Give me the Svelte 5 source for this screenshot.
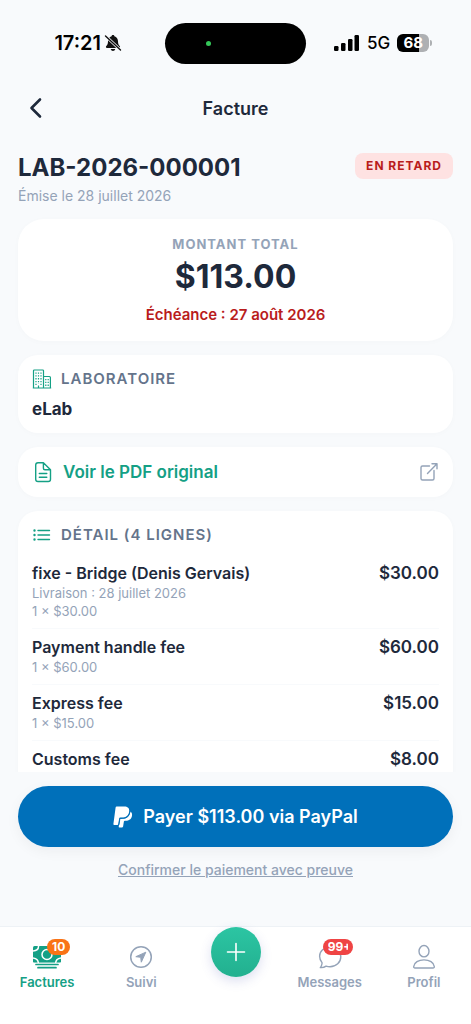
<script lang="ts">
  type Line = {
    name: string;
    delivery?: string;
    quantity: number;
    price: number;
  };

  const invoice = {
    number: "LAB-2026-000001",
    issued: "28 juillet 2026",
    due: "27 août 2026",
    lab: "eLab",
  };

  const lines: Line[] = [
    { name: "fixe - Bridge (Denis Gervais)", delivery: "28 juillet 2026", quantity: 1, price: 30 },
    { name: "Payment handle fee", quantity: 1, price: 60 },
    { name: "Express fee", quantity: 1, price: 15 },
    { name: "Customs fee", quantity: 1, price: 8 },
  ];

  const total = lines.reduce((sum, line) => sum + line.quantity * line.price, 0);

  const money = (value: number) => `$${value.toFixed(2)}`;
</script>

<div class="screen">
  <div class="status-bar">
    <div class="clock">
      <span>17:21</span>
      <svg width="18" height="18" viewBox="0 0 18 18" aria-hidden="true">
        <path fill="#111" d="M9 1c-.9 0-1.300.6-1.400 1.200C5.200 2.900 4 5 4 7.300c0 2.700-.7 3.700-1.700 4.700-.7.700-.4 1.900.7 1.900h12c1.100 0 1.400-1.200.7-1.900-1-1-1.700-2-1.700-4.700 0-2.300-1.200-4.400-3.600-5.100C10.300 1.600 9.900 1 9 1zM6.700 15h4.600c-.3 1.200-1.200 1.900-2.300 1.900S7 16.200 6.700 15z" />
        <path stroke="#f8fafc" stroke-width="3" d="M1 1.500l16 15" />
        <path stroke="#111" stroke-width="1.400" stroke-linecap="round" d="M1.500 2l15 14" />
      </svg>
    </div>
    <div class="island"><span class="dot"></span></div>
    <div class="signal">
      <svg width="26" height="16" viewBox="0 0 26 16" fill="#000" aria-hidden="true">
        <rect x="0" y="11" width="4.500" height="5" rx="1.200" />
        <rect x="7" y="8" width="4.500" height="8" rx="1.200" />
        <rect x="14" y="4" width="4.500" height="12" rx="1.200" />
        <rect x="20.500" y="0" width="4.500" height="16" rx="1.200" />
      </svg>
      <span class="network">5G</span>
      <span class="battery">68</span>
    </div>
  </div>

  <header>
    <button class="back" aria-label="Retour">
      <svg width="14" height="22" viewBox="0 0 14 22" fill="none" stroke="#1e293b" stroke-width="2.600" stroke-linecap="round" stroke-linejoin="round">
        <path d="M11 2.500L2.500 11l8.500 8.500" />
      </svg>
    </button>
    <h1>Facture</h1>
  </header>

  <main>
    <div class="heading">
      <div>
        <h2>{invoice.number}</h2>
        <p class="issued">Émise le {invoice.issued}</p>
      </div>
      <span class="status">EN RETARD</span>
    </div>

    <section class="card total">
      <p class="total-label">MONTANT TOTAL</p>
      <p class="amount">{money(total)}</p>
      <p class="due">Échéance : {invoice.due}</p>
    </section>

    <section class="card">
      <h3>
        <svg width="20" height="20" viewBox="0 0 20 20" fill="none" stroke="#14a085" stroke-width="1.200" stroke-linejoin="round" aria-hidden="true">
          <path d="M1.500 19V1.800Q1.500 1 2.300 1h8.400q.8 0 .8.800V19M11.500 7.500h6q.9 0 .9.900V19M.8 19h18.400M6.500 19v-2.500" />
          <path stroke-dasharray="1.300 1.500" d="M4 3.500v13M6.500 3.500v11.500M9 3.500v13M13.800 10v7M16.200 10v7" />
        </svg>
        LABORATOIRE
      </h3>
      <p class="lab">{invoice.lab}</p>
    </section>

    <a class="card pdf" href="#pdf">
      <svg width="22" height="22" viewBox="0 0 22 22" fill="none" stroke="#14a085" stroke-width="1.400" stroke-linecap="round" stroke-linejoin="round" aria-hidden="true">
        <path d="M18.500 8.800v9.400q0 2.300-2.300 2.300H6q-2.300 0-2.300-2.300V4Q3.700 1.700 6 1.700h5.400zM11.400 1.700v5.600q0 1.500 1.500 1.500h5.600M7.300 12.500h7.500M7.300 16.200h7.500" />
      </svg>
      <span>Voir le PDF original</span>
      <svg width="20" height="20" viewBox="0 0 20 20" fill="none" stroke="#94a3b8" stroke-width="1.400" stroke-linecap="round" stroke-linejoin="round" aria-hidden="true">
        <path d="M10.500 4H3.500Q2 4 2 5.500v11Q2 18 3.500 18h10q1.500 0 1.500-1.500V8.500M13 1.800h5v5M18 1.800l-9.500 9.700" />
      </svg>
    </a>

    <section class="card">
      <h3>
        <svg width="20" height="20" viewBox="0 0 20 20" fill="none" stroke="#14a085" stroke-width="1.400" stroke-linecap="round" aria-hidden="true">
          <path d="M6 5.500h11.500M6 10h11.500M6 14.500h11.500" />
          <path stroke-width="2.400" d="M2.500 5.500h.01M2.500 10h.01M2.500 14.500h.01" />
        </svg>
        DÉTAIL ({lines.length} LIGNES)
      </h3>
      <ul>
        {#each lines as line (line.name)}
          <li>
            <div>
              <p class="name">{line.name}</p>
              {#if line.delivery}
                <p class="meta">Livraison : {line.delivery}</p>
              {/if}
              <p class="meta">{line.quantity} × {money(line.price)}</p>
            </div>
            <span class="price">{money(line.quantity * line.price)}</span>
          </li>
        {/each}
      </ul>
    </section>
  </main>

  <div class="actions">
    <button class="pay">
      <svg width="20" height="22" viewBox="0 0 20 22" fill="#fff" aria-hidden="true">
        <path d="M3.700.5h7.600c3.200 0 5.300 1.500 4.900 4.900-.6 4.200-3.300 6-6.900 6H7.200c-.6 0-.9.300-1 .9L5.300 18c-.1.600-.4.900-1 .9H1c-.5 0-.7-.3-.6-.8L2.600 1.500C2.700.8 3.100.500 3.700.500z" />
        <path d="M17.300 5.600c1.500.8 2 2.300 1.700 4.100-.6 3.600-3 5-6.200 5h-.9c-.6 0-.9.300-1 .9l-.8 5c-.1.500-.4.800-.9.800H6.300c-.5 0-.7-.3-.6-.7l1.200-7.200c.1-.5.400-.8.900-.8h1.700c4.200 0 7.100-2.200 7.800-7.100z" />
        <path fill="none" stroke="#0070ba" stroke-width="1" d="M17 5.300c-.6 4.900-3.400 7.100-7.600 7.100H7.800c-.6 0-.9.300-1 .8L5.900 18.900" />
      </svg>
      Payer {money(total)} via PayPal
    </button>
    <a class="confirm" href="#preuve">Confirmer le paiement avec preuve</a>
  </div>

  <nav>
    <a class="tab active" href="#factures">
      <span class="icon">
        <svg width="28" height="24" viewBox="0 0 28 24" aria-hidden="true">
          <rect x="0" y="1" width="28" height="17" rx="1.500" fill="#14a085" />
          <g fill="none" stroke="#fff" stroke-width="1.500">
            <circle cx="14" cy="9.500" r="5" />
            <path d="M5.500 0v1.500q0 4-5.500 4.500M22.500 0v1.500q0 4 5.500 4.500M0 13q5.500.5 5.500 6M28 13q-5.500.5-5.500 6" />
          </g>
          <path stroke="#fff" stroke-width="1.500" d="M0 18.300h28" />
          <path stroke="#14a085" stroke-width="1.700" stroke-linecap="round" d="M3 19.500h22M5 22.700h18" />
        </svg>
        <span class="badge orange">10</span>
      </span>
      Factures
    </a>
    <a class="tab" href="#suivi">
      <span class="icon">
        <svg width="24" height="24" viewBox="0 0 24 24" aria-hidden="true">
          <circle cx="12" cy="12" r="10.300" fill="none" stroke="#94a3b8" stroke-width="1.500" />
          <path fill="#94a3b8" stroke="#94a3b8" stroke-linejoin="round" d="M16.800 7.200L6.800 11.700l4.900.6.600 4.900z" />
        </svg>
      </span>
      Suivi
    </a>
    <div class="tab">
      <button class="add" aria-label="Ajouter">
        <svg width="22" height="22" viewBox="0 0 22 22" stroke="#fff" stroke-width="1.600" stroke-linecap="round">
          <path d="M11 2.500v17M2.500 11h17" />
        </svg>
      </button>
    </div>
    <a class="tab" href="#messages">
      <span class="icon">
        <svg width="24" height="24" viewBox="0 0 24 24" fill="none" stroke="#94a3b8" stroke-width="1.400" stroke-linecap="round" stroke-linejoin="round" aria-hidden="true">
          <path d="M12 2C6 2 1.600 6 1.600 11.200c0 2.600 1 4.600 2.400 6.400.3.800-.5 3.600-1.700 5 2.200.2 4.300-.4 5.800-1.500 1.200.4 2.500.6 3.900.6 6.200 0 10.800-4.500 10.800-10S18 2 12 2z" />
        </svg>
        <span class="badge red"><span>99+</span></span>
      </span>
      Messages
    </a>
    <a class="tab" href="#profil">
      <span class="icon">
        <svg width="24" height="26" viewBox="0 0 24 26" fill="none" stroke="#94a3b8" stroke-width="1.400" stroke-linejoin="round" aria-hidden="true">
          <ellipse cx="12" cy="7.200" rx="5" ry="5.700" />
          <path d="M1.700 22.500C2.200 18.500 6.500 15.900 12 15.900s9.800 2.600 10.300 6.600q.1 1.500-1.300 1.500H3q-1.400 0-1.300-1.500z" />
        </svg>
      </span>
      Profil
    </a>
  </nav>
</div>

<style>
  :global(body) {
    margin: 0;
    background: #f8fafc;
  }

  .screen {
    display: flex;
    flex-direction: column;
    height: 100vh;
    background: #f8fafc;
    color: #1e293b;
    font-family: Inter, "Liberation Sans", sans-serif;
  }

  h1,
  h2,
  h3,
  p,
  ul {
    margin: 0;
    padding: 0;
  }

  button {
    border: 0;
    padding: 0;
    background: none;
    font-family: inherit;
    cursor: pointer;
  }

  a {
    color: inherit;
    text-decoration: none;
  }

  .status-bar {
    display: grid;
    grid-template-columns: 1fr auto 1fr;
    align-items: center;
    flex-shrink: 0;
    height: 86px;
    color: #000;
  }

  .clock {
    display: flex;
    align-items: center;
    justify-content: flex-end;
    gap: 3px;
    padding-right: 43px;
    font-size: 20px;
    font-weight: 600;
  }

  .island {
    display: flex;
    align-items: center;
    box-sizing: border-box;
    width: 141px;
    height: 41px;
    padding-left: 41px;
    border-radius: 21px;
    background: #000;
  }

  .dot {
    width: 5px;
    height: 5px;
    border-radius: 50%;
    background: #34c759;
  }

  .signal {
    display: flex;
    align-items: center;
    gap: 7px;
    padding-left: 28px;
  }

  .network {
    font-size: 17px;
    font-weight: 500;
  }

  .battery {
    position: relative;
    width: 32px;
    height: 18px;
    border-radius: 6px;
    background: linear-gradient(90deg, #000 68%, #aeb0b3 68%);
    color: #fff;
    font-size: 15px;
    font-weight: 700;
    line-height: 18px;
    text-align: center;
  }

  .battery::after {
    content: "";
    position: absolute;
    top: 6px;
    right: -3px;
    width: 2px;
    height: 6px;
    border-radius: 0 2px 2px 0;
    background: #aeb0b3;
  }

  header {
    display: grid;
    grid-template-columns: 1fr auto 1fr;
    align-items: center;
    flex-shrink: 0;
    height: 44px;
    padding: 0 18px;
  }

  .back {
    display: flex;
    align-items: center;
    justify-content: center;
    width: 36px;
    height: 36px;
  }

  h1 {
    font-size: 18px;
    font-weight: 600;
  }

  main {
    display: flex;
    flex-direction: column;
    flex: 1;
    gap: 14px;
    min-height: 0;
    padding: 23px 18px 0;
    overflow-y: auto;
    scrollbar-width: none;
  }

  .heading {
    display: flex;
    align-items: flex-start;
    justify-content: space-between;
  }

  h2 {
    font-size: 24px;
    font-weight: 700;
    line-height: 30px;
  }

  .issued {
    margin-top: 4px;
    color: #94a3b8;
    font-size: 14px;
    line-height: 18px;
  }

  .status {
    padding: 0 11px;
    border-radius: 8px;
    background: #fee2e2;
    color: #b91c1c;
    font-size: 12px;
    font-weight: 700;
    letter-spacing: 1px;
    line-height: 26px;
  }

  .card {
    flex-shrink: 0;
    padding: 14px;
    border-radius: 20px;
    background: #fff;
    box-shadow: 0 1px 6px rgba(15, 23, 42, 0.02);
  }

  .total {
    padding: 16px;
    border-radius: 26px;
    text-align: center;
  }

  .total-label {
    color: #94a3b8;
    font-size: 13px;
    font-weight: 700;
    letter-spacing: 1px;
    line-height: 18px;
  }

  .amount {
    margin-bottom: 4px;
    font-size: 32px;
    font-weight: 700;
    line-height: 48px;
  }

  .due {
    color: #b91c1c;
    font-size: 15px;
    font-weight: 600;
    line-height: 20px;
  }

  h3 {
    display: flex;
    align-items: center;
    gap: 9px;
    margin-bottom: 10px;
    color: #64748b;
    font-size: 15px;
    font-weight: 600;
    letter-spacing: 1px;
    line-height: 20px;
  }

  .lab {
    font-size: 17px;
    font-weight: 700;
    line-height: 20px;
  }

  .pdf {
    display: flex;
    align-items: center;
    gap: 9px;
    color: #14a085;
    font-size: 17px;
    font-weight: 600;
    line-height: 22px;
  }

  .pdf span {
    flex: 1;
  }

  ul {
    list-style: none;
  }

  li {
    display: flex;
    justify-content: space-between;
    padding: 8px 0;
    border-bottom: 1px solid #f8fafc;
  }

  .name {
    margin-bottom: 1px;
    font-size: 16px;
    font-weight: 600;
    line-height: 20px;
  }

  .meta {
    color: #94a3b8;
    font-size: 13px;
    line-height: 18px;
  }

  .price {
    font-size: 17px;
    font-weight: 600;
    line-height: 20px;
  }

  .actions {
    display: flex;
    flex-direction: column;
    align-items: center;
    flex-shrink: 0;
    gap: 13px;
    padding: 14px 18px 46px;
    background: #f8fafc;
  }

  .pay {
    display: flex;
    align-items: center;
    justify-content: center;
    gap: 10px;
    width: 100%;
    height: 61px;
    border-radius: 31px;
    background: #0070ba;
    box-shadow: 0 4px 14px rgba(15, 23, 42, 0.05);
    color: #fff;
    font-size: 18px;
    font-weight: 600;
  }

  .confirm {
    color: #94a3b8;
    font-size: 14px;
    font-weight: 500;
    line-height: 20px;
    text-decoration: underline;
  }

  nav {
    display: flex;
    flex-shrink: 0;
    box-sizing: border-box;
    height: 98px;
    border-top: 1px solid #eef2f6;
    background: #fff;
  }

  .tab {
    display: flex;
    flex: 1 1 0;
    flex-direction: column;
    align-items: center;
    gap: 3px;
    padding-top: 17px;
    color: #94a3b8;
    font-size: 13px;
    font-weight: 600;
    line-height: 18px;
  }

  div.tab {
    padding-top: 0;
  }

  .active {
    color: #14a085;
  }

  .icon {
    position: relative;
    display: flex;
    align-items: center;
    height: 26px;
  }

  .badge {
    position: absolute;
    top: -5px;
    left: 14px;
    box-sizing: border-box;
    height: 16px;
    padding: 0 5px;
    border-radius: 8px;
    color: #fff;
    font-size: 12px;
    font-weight: 700;
    line-height: 16px;
  }

  .orange {
    background: #f97316;
  }

  .red {
    left: 5px;
    width: 30px;
    background: #ef4444;
  }

  /* long counts are cut at the pill's inner edge */
  .red span {
    display: block;
    overflow: hidden;
  }

  .add {
    display: flex;
    align-items: center;
    justify-content: center;
    width: 50px;
    height: 50px;
    border-radius: 50%;
    background: linear-gradient(#2cc5a3, #22b08f);
    box-shadow: 0 4px 12px rgba(79, 90, 180, 0.2);
  }
</style>
